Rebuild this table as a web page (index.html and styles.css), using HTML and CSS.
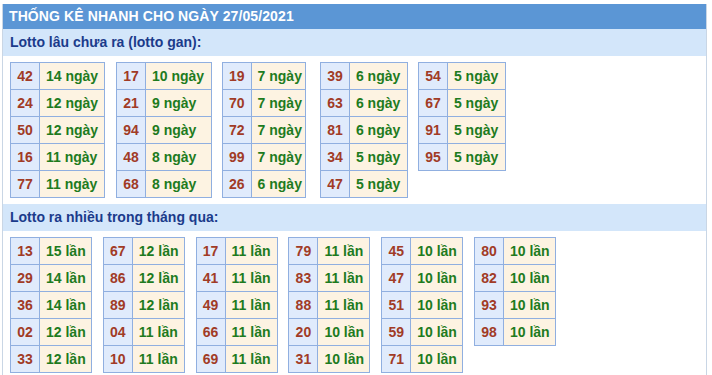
FILE: index.html
```html
<!DOCTYPE html>
<html lang="vi">
<head>
<meta charset="utf-8">
<title>Thống kê nhanh</title>
<link rel="stylesheet" href="styles.css">
</head>
<body>
<div class="box">
  <div class="title">THỐNG KÊ NHANH CHO NGÀY 27/05/2021</div>
  <div class="sub">Lotto lâu chưa ra (lotto gan):</div>
  <div class="tables gan">
    <table class="lt"><tr><td class="n">42</td><td class="v">14 ngày</td></tr><tr><td class="n">24</td><td class="v">12 ngày</td></tr><tr><td class="n">50</td><td class="v">12 ngày</td></tr><tr><td class="n">16</td><td class="v">11 ngày</td></tr><tr><td class="n">77</td><td class="v">11 ngày</td></tr></table>
    <table class="lt"><tr><td class="n">17</td><td class="v">10 ngày</td></tr><tr><td class="n">21</td><td class="v">9 ngày</td></tr><tr><td class="n">94</td><td class="v">9 ngày</td></tr><tr><td class="n">48</td><td class="v">8 ngày</td></tr><tr><td class="n">68</td><td class="v">8 ngày</td></tr></table>
    <table class="lt"><tr><td class="n">19</td><td class="v">7 ngày</td></tr><tr><td class="n">70</td><td class="v">7 ngày</td></tr><tr><td class="n">72</td><td class="v">7 ngày</td></tr><tr><td class="n">99</td><td class="v">7 ngày</td></tr><tr><td class="n">26</td><td class="v">6 ngày</td></tr></table>
    <table class="lt"><tr><td class="n">39</td><td class="v">6 ngày</td></tr><tr><td class="n">63</td><td class="v">6 ngày</td></tr><tr><td class="n">81</td><td class="v">6 ngày</td></tr><tr><td class="n">34</td><td class="v">5 ngày</td></tr><tr><td class="n">47</td><td class="v">5 ngày</td></tr></table>
    <table class="lt"><tr><td class="n">54</td><td class="v">5 ngày</td></tr><tr><td class="n">67</td><td class="v">5 ngày</td></tr><tr><td class="n">91</td><td class="v">5 ngày</td></tr><tr><td class="n">95</td><td class="v">5 ngày</td></tr></table>
  </div>
  <div class="sub">Lotto ra nhiều trong tháng qua:</div>
  <div class="tables nhieu">
    <table class="lt"><tr><td class="n">13</td><td class="v">15 lần</td></tr><tr><td class="n">29</td><td class="v">14 lần</td></tr><tr><td class="n">36</td><td class="v">14 lần</td></tr><tr><td class="n">02</td><td class="v">12 lần</td></tr><tr><td class="n">33</td><td class="v">12 lần</td></tr></table>
    <table class="lt"><tr><td class="n">67</td><td class="v">12 lần</td></tr><tr><td class="n">86</td><td class="v">12 lần</td></tr><tr><td class="n">89</td><td class="v">12 lần</td></tr><tr><td class="n">04</td><td class="v">11 lần</td></tr><tr><td class="n">10</td><td class="v">11 lần</td></tr></table>
    <table class="lt"><tr><td class="n">17</td><td class="v">11 lần</td></tr><tr><td class="n">41</td><td class="v">11 lần</td></tr><tr><td class="n">49</td><td class="v">11 lần</td></tr><tr><td class="n">66</td><td class="v">11 lần</td></tr><tr><td class="n">69</td><td class="v">11 lần</td></tr></table>
    <table class="lt"><tr><td class="n">79</td><td class="v">11 lần</td></tr><tr><td class="n">83</td><td class="v">11 lần</td></tr><tr><td class="n">88</td><td class="v">11 lần</td></tr><tr><td class="n">20</td><td class="v">10 lần</td></tr><tr><td class="n">31</td><td class="v">10 lần</td></tr></table>
    <table class="lt"><tr><td class="n">45</td><td class="v">10 lần</td></tr><tr><td class="n">47</td><td class="v">10 lần</td></tr><tr><td class="n">51</td><td class="v">10 lần</td></tr><tr><td class="n">59</td><td class="v">10 lần</td></tr><tr><td class="n">71</td><td class="v">10 lần</td></tr></table>
    <table class="lt"><tr><td class="n">80</td><td class="v">10 lần</td></tr><tr><td class="n">82</td><td class="v">10 lần</td></tr><tr><td class="n">93</td><td class="v">10 lần</td></tr><tr><td class="n">98</td><td class="v">10 lần</td></tr></table>
  </div>
</div>
</body>
</html>
```
FILE: styles.css
```css
html, body {
  margin: 0;
  padding: 0;
  background: #ffffff;
}
body {
  padding: 4px 0 0 2px;
  font-family: "Liberation Sans", Arial, sans-serif;
}
.box {
  width: 703px;
  border-left: 1px solid #c9d6e5;
  border-right: 1px solid #c9d6e5;
  min-height: 371px;
}
.title {
  background: #5b96d5;
  color: #ffffff;
  font-weight: bold;
  font-size: 14px;
  letter-spacing: 0.1px;
  height: 25px;
  line-height: 25px;
  padding-left: 6px;
}
.sub {
  background: #d3e6fa;
  color: #1b3b8b;
  font-weight: bold;
  font-size: 14px;
  height: 27px;
  line-height: 27px;
  padding-left: 7px;
}
.tables {
  display: flex;
  flex-wrap: wrap;
  align-items: flex-start;
  padding: 6px 7px 6px 7px;
}
.gan .lt:nth-child(1) { width: 95px; }
.gan .lt:nth-child(2) { width: 96px; margin-left: 11px; }
.gan .lt:nth-child(3) { width: 83px; margin-left: 10px; }
.gan .lt:nth-child(4) { width: 88px; margin-left: 14px; }
.gan .lt:nth-child(5) { width: 88px; margin-left: 10px; }
.nhieu { gap: 10.8px; }
.nhieu .lt { width: 82px; }
.lt {
  border-collapse: collapse;
  font-size: 14px;
  font-weight: bold;
}
.lt td {
  border: 1px solid #90afe0;
  height: 26px;
  padding: 0 3px 0 6px;
  vertical-align: middle;
  white-space: nowrap;
}
.lt td.n {
  width: 16px;
  padding: 0 6px;
  background: #e0ebfc;
  color: #a13b26;
  text-align: center;
}
.lt td.v {
  background: #fdf3e2;
  color: #1e7b1e;
}
```
